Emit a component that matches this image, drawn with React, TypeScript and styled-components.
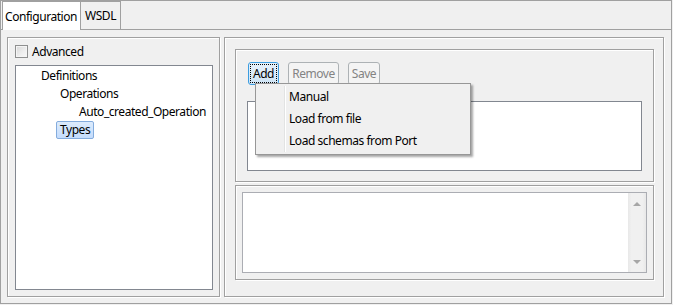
import React from 'react';
import styled, { createGlobalStyle } from 'styled-components';

const GlobalStyle = createGlobalStyle`
	html, body {
		margin: 0;
		padding: 0;
		background: #f0f0f0;
	}
	* {
		box-sizing: border-box;
	}
`;

interface ITreeItem {
	label: string;
	level: number;
	selected?: boolean;
}

const treeItems: Array<ITreeItem> = [
	{ label: 'Definitions', level: 0 },
	{ label: 'Operations', level: 1 },
	{ label: 'Auto_created_Operation', level: 2 },
	{ label: 'Types', level: 1, selected: true }
];

const menuItems = ['Manual', 'Load from file', 'Load schemas from Port'];

const App = () => {
	return (
		<>
			<GlobalStyle />
			<Window>
				<TabStrip>
					<Tab $active>Configuration</Tab>
					<Tab>WSDL</Tab>
				</TabStrip>
				<TabPanel>
					<LeftGroup>
						<CheckRow>
							<CheckBox />
							<span>Advanced</span>
						</CheckRow>
						<Tree>
							{treeItems.map(item => (
								<TreeRow key={item.label} $level={item.level}>
									<TreeLabel $selected={item.selected}>{item.label}</TreeLabel>
								</TreeRow>
							))}
						</Tree>
					</LeftGroup>
					<RightGroup>
						<TypesGroup>
							<ButtonRow>
								<Button $w={31} $focused>
									Add
								</Button>
								<Button $w={51} disabled>
									Remove
								</Button>
								<Button $w={32} disabled>
									Save
								</Button>
								<Menu>
									{menuItems.map(item => (
										<MenuItem key={item}>{item}</MenuItem>
									))}
								</Menu>
							</ButtonRow>
							<TableBox />
						</TypesGroup>
						<SourceGroup>
							<TextArea>
								<ScrollBar>
									<Arrow $up />
									<Arrow />
								</ScrollBar>
							</TextArea>
						</SourceGroup>
					</RightGroup>
				</TabPanel>
			</Window>
		</>
	);
};

export default App;

const Window = styled.div`
	width: 672px;
	height: 304px;
	border: 1px solid #a0a0a0;
	background: #f0f0f0;
	display: flex;
	flex-direction: column;
	font-family: 'Noto Sans', 'DejaVu Sans', sans-serif;
	font-size: 12px;
	letter-spacing: -0.45px;
	color: #000;
`;
const TabStrip = styled.div`
	height: 28px;
	display: flex;
	align-items: flex-end;
	padding-left: 1px;
`;
const Tab = styled.div<{ $active?: boolean }>`
	position: relative;
	display: flex;
	align-items: center;
	padding: 0 3px 0 2px;
	border: 1px solid #a0a0a0;
	border-bottom: none;
	${props =>
		props.$active
			? `
		height: 29px;
		margin-bottom: -1px;
		background: #fff;
		z-index: 1;
	`
			: `
		height: 28px;
		margin-left: -1px;
		padding: 0 4px;
		background: #f0f0f0;
	`}
`;
const TabPanel = styled.div`
	flex: 1;
	display: flex;
	gap: 4px;
	padding: 7px 7px 6px 6px;
	border-top: 1px solid #a0a0a0;
`;
const Etched = styled.div`
	border: 1px solid #a0a0a0;
	box-shadow: inset 1px 1px 0 #fff, 1px 1px 0 #fff;
`;
const LeftGroup = styled(Etched)`
	width: 213px;
	display: flex;
	flex-direction: column;
	gap: 7px;
	padding: 7px 6px 6px 7px;
`;
const CheckRow = styled.label`
	height: 13px;
	display: flex;
	align-items: center;
	gap: 4px;
	line-height: 13px;
`;
const CheckBox = styled.span`
	width: 13px;
	height: 13px;
	border: 1px solid #8e8f8f;
	background: linear-gradient(135deg, #d7d7d7 0%, #eeeeee 60%, #f7f7f7 100%);
	box-shadow: inset 0 0 0 1px #f4f4f4;
`;
const Tree = styled.div`
	flex: 1;
	padding-top: 1px;
	border: 1px solid #828790;
	background: #fff;
`;
const TreeRow = styled.div<{ $level: number }>`
	height: 18px;
	display: flex;
	align-items: center;
	padding-left: ${props => 21 + props.$level * 19}px;
`;
const TreeLabel = styled.span<{ $selected?: boolean }>`
	height: 18px;
	line-height: 16px;
	padding: 0 3px;
	border: 1px solid ${props => (props.$selected ? '#84acdd' : 'transparent')};
	border-radius: 2px;
	background: ${props => (props.$selected ? 'linear-gradient(#dcebfc, #c4dcfc)' : 'transparent')};
`;
const RightGroup = styled(Etched)`
	width: 440px;
	display: flex;
	flex-direction: column;
	gap: 3px;
	padding: 11px 9px 16px 10px;
`;
const TypesGroup = styled(Etched)`
	height: 133px;
	display: flex;
	flex-direction: column;
	gap: 16px;
	padding: 12px 11px 10px 11px;
`;
const ButtonRow = styled.div`
	position: relative;
	display: flex;
	gap: 9px;
	padding-left: 1px;
`;
const Button = styled.button<{ $w: number; $focused?: boolean }>`
	width: ${props => props.$w}px;
	height: 23px;
	padding: 0;
	font: inherit;
	letter-spacing: inherit;
	border-radius: 3px;
	border: 1px solid ${props => (props.$focused ? '#3c9de0' : '#adb2b5')};
	background: ${props => (props.$focused ? 'linear-gradient(#e5f1fb, #cfe4f5)' : '#f4f4f4')};
	color: ${props => (props.$focused ? '#000' : '#838383')};
	outline: ${props => (props.$focused ? '1px dotted #000' : 'none')};
	outline-offset: -3px;
`;
const Menu = styled.div`
	position: absolute;
	left: 8px;
	top: 21px;
	width: 216px;
	height: 72px;
	padding: 2px 0;
	border: 1px solid #979797;
	background: #f0f0f0;
	box-shadow: 2px 2px 2px rgba(0, 0, 0, 0.35);
	z-index: 2;

	&::before {
		content: '';
		position: absolute;
		left: 28px;
		top: 2px;
		bottom: 2px;
		width: 1px;
		background: #e2e3e3;
		box-shadow: 1px 0 0 #fff;
	}
`;
const MenuItem = styled.div`
	height: 22px;
	line-height: 22px;
	padding-left: 33px;
`;
const TableBox = styled.div`
	height: 70px;
	border: 1px solid #828790;
	background: #fff;
`;
const SourceGroup = styled(Etched)`
	height: 95px;
	padding: 6px;
`;
const TextArea = styled.div`
	height: 100%;
	display: flex;
	justify-content: flex-end;
	border: 1px solid #abadb3;
	background: #fff;
`;
const ScrollBar = styled.div`
	width: 18px;
	display: flex;
	flex-direction: column;
	justify-content: space-between;
	align-items: center;
	padding: 9px 0 8px;
	background: linear-gradient(to right, #e8e8e8, #f0f0f0 20%, #f0f0f0 80%, #e8e8e8);
`;
const Arrow = styled.span<{ $up?: boolean }>`
	width: 0;
	height: 0;
	border-left: 4px solid transparent;
	border-right: 4px solid transparent;
	${props => (props.$up ? 'border-bottom: 4px solid #a6a6a6;' : 'border-top: 4px solid #a6a6a6;')}
`;
